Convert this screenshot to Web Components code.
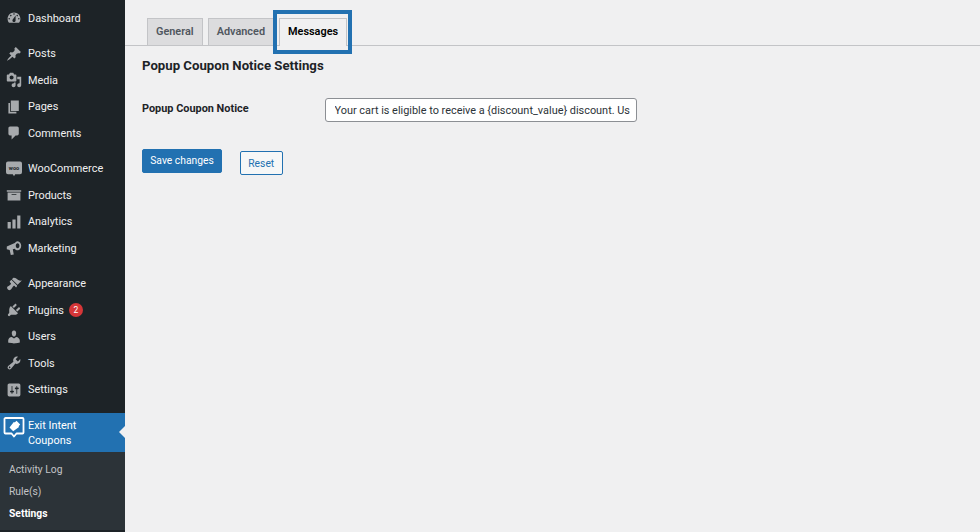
<!DOCTYPE html>
<html>
<head>
<meta charset="utf-8">
<title>Settings</title>
<style>
html, body { margin: 0; height: 100%; background: #f0f0f1; }
body { font-family: Roboto, "Liberation Sans", sans-serif; overflow: hidden; }
wp-page { height: 532px; }
</style>
</head>
<body>

<wp-page>
  <wp-sidebar slot="side">
    <wp-menu-item icon="dashboard">Dashboard</wp-menu-item>
    <wp-menu-sep></wp-menu-sep>
    <wp-menu-item icon="post">Posts</wp-menu-item>
    <wp-menu-item icon="media">Media</wp-menu-item>
    <wp-menu-item icon="page">Pages</wp-menu-item>
    <wp-menu-item icon="comments">Comments</wp-menu-item>
    <wp-menu-sep></wp-menu-sep>
    <wp-menu-item icon="woo">WooCommerce</wp-menu-item>
    <wp-menu-item icon="archive">Products</wp-menu-item>
    <wp-menu-item icon="chart">Analytics</wp-menu-item>
    <wp-menu-item icon="megaphone">Marketing</wp-menu-item>
    <wp-menu-sep></wp-menu-sep>
    <wp-menu-item icon="appearance">Appearance</wp-menu-item>
    <wp-menu-item icon="plugins" badge="2">Plugins</wp-menu-item>
    <wp-menu-item icon="users">Users</wp-menu-item>
    <wp-menu-item icon="tools">Tools</wp-menu-item>
    <wp-menu-item icon="settings">Settings</wp-menu-item>
    <wp-menu-active>Exit Intent<br>Coupons</wp-menu-active>
    <wp-submenu>
      <a>Activity Log</a>
      <a>Rule(s)</a>
      <a class="current">Settings</a>
    </wp-submenu>
  </wp-sidebar>

  <wp-tabs>
    <wp-tab>General</wp-tab>
    <wp-tab>Advanced</wp-tab>
    <wp-tab active>Messages</wp-tab>
  </wp-tabs>
  <wp-settings heading="Popup Coupon Notice Settings" label="Popup Coupon Notice"
    value="Your cart is eligible to receive a {discount_value} discount. Use code {coupon_code} at checkout."></wp-settings>
</wp-page>

<script>
const ICONS = {
  dashboard: '<path fill-rule="evenodd" d="M3.76 16h12.48c1.1-1.37 1.76-3.11 1.76-5 0-4.42-3.58-8-8-8s-8 3.58-8 8c0 1.89.66 3.63 1.76 5zM10 4c.55 0 1 .45 1 1s-.45 1-1 1-1-.45-1-1 .45-1 1-1zM6 6c.55 0 1 .45 1 1s-.45 1-1 1-1-.45-1-1 .45-1 1-1zm8 0c.55 0 1 .45 1 1s-.45 1-1 1-1-.45-1-1 .45-1 1-1zm-5.37 5.55L12 7v6c0 1.1-.9 2-2 2s-2-.9-2-2c0-.57.24-1.08.63-1.45zM4 10c.55 0 1 .45 1 1s-.45 1-1 1-1-.45-1-1 .45-1 1-1zm12 0c.55 0 1 .45 1 1s-.45 1-1 1-1-.45-1-1 .45-1 1-1z"/>',
  post: '<path d="M10.44 3.02l1.82-1.82 6.36 6.35-1.83 1.82c-1.05-.68-2.48-.57-3.41.36l-.75.75c-.92.93-1.04 2.35-.35 3.41l-1.83 1.82-2.41-2.41-2.8 2.79c-.42.42-3.38 2.71-3.8 2.29s1.86-3.39 2.28-3.81l2.79-2.79L4.1 9.36l1.83-1.82c1.05.69 2.48.57 3.4-.36l.75-.75c.93-.92 1.05-2.35.36-3.41z"/>',
  media: '<path fill-rule="evenodd" d="M13 11V4c0-.55-.45-1-1-1h-1.67L9 1H5L3.67 3H2c-.55 0-1 .45-1 1v7c0 .55.45 1 1 1h10c.55 0 1-.45 1-1zM7 4.5c1.38 0 2.5 1.12 2.5 2.5S8.38 9.5 7 9.5 4.5 8.38 4.5 7 5.62 4.5 7 4.5zM14 6h5v10.5c0 1.38-1.12 2.5-2.5 2.5S14 17.88 14 16.5s1.12-2.5 2.5-2.5c.17 0 .34.02.5.05V9h-3V6zm-4 8.05V13h2v3.5c0 1.38-1.12 2.5-2.5 2.5S7 17.88 7 16.5 8.12 14 9.5 14c.17 0 .34.02.5.05z"/>',
  page: '<path d="M6 15V2h10v13H6zm-1 1h8v2H3V5h2v11z"/>',
  comments: '<path d="M5 2h9c1.1 0 2 .9 2 2v7c0 1.1-.9 2-2 2h-2l-5 5v-5H5c-1.1 0-2-.9-2-2V4c0-1.1.9-2 2-2z"/>',
  woo: '<path d="M2.5 0.5h15A2.500 2.500 0 0 1 20 3v11a2.500 2.500 0 0 1-2.500 2.500H11.500L10 19l-1.500-2.500H2.500A2.500 2.500 0 0 1 0 14V3A2.500 2.500 0 0 1 2.500 0.5z"/><text x="10" y="11" text-anchor="middle" font-size="7" font-weight="700" fill="#1d2327" font-family="Roboto, sans-serif">woo</text>',
  archive: '<path fill-rule="evenodd" d="M19 4v2H1V4h18zM2 7h16v10H2V7zm11 3V9H7v1h6z"/>',
  chart: '<path d="M18 18V2h-4v16h4zm-6 0V7H8v11h4zm-6 0v-8H2v8h4z"/>',
  megaphone: '<path fill-rule="evenodd" d="M1 8 11 3.800C11.800 2.600 13.200 1.500 14.500 1.500c2.800 0 4.500 2.900 4.500 5.700s-1.700 5.700-4.500 5.700c-1.300 0-2.700-.8-3.500-2L8.500 11.500l1.200 6.500-3.700.8-1.400-6.300L1 11.500zM14.500 4.200c-1.300 0-2.300 1.300-2.300 3s1 3 2.300 3 2.300-1.300 2.300-3-1-3-2.300-3z"/>',
  appearance: '<path d="M14.480 11.060 7.410 3.990l1.500-1.500c.5-.56 2.300-.47 3.510.32 1.210.8 1.430 1.280 2.910 2.100 1.180.64 2.450 1.260 4.450.85zm-.71.71L6.700 4.700 4.930 6.470c-.39.39-.39 1.020 0 1.410l1.060 1.060c.39.39.39 1.030 0 1.420-.6.6-1.430 1.110-2.210 1.690-.35.26-.7.53-1.010.84C1.430 13.230 1 14.500 1.700 15.800c.5.900 1.600 1.600 2.500 1.900 1.100-.3 2-1.100 2.700-1.900.31-.31.58-.66.84-1.010.58-.78 1.090-1.610 1.690-2.210.39-.39 1.030-.39 1.420 0l1.060 1.060c.39.39 1.020.39 1.410 0z"/>',
  plugins: '<path d="M13.110 4.360 9.870 7.600 8 5.730l3.240-3.240c.35-.34 1.050-.2 1.560.32.52.51.66 1.210.31 1.550zm-8 1.770.91-1.120 9.010 9.010-1.190.84c-.71.71-2.630 1.160-3.820 1.160H6.140L4.900 17.260c-.59.59-1.540.59-2.120 0-.59-.58-.59-1.530 0-2.120l1.240-1.240v-3.880c0-1.130.4-3.190 1.090-3.890zm7.260 3.970 3.240-3.240c.34-.35 1.040-.21 1.550.31.52.51.66 1.210.31 1.550l-3.240 3.250z"/>',
  users: '<path d="M10 9.250c-2.270 0-2.730-3.440-2.730-3.440C7 4.020 7.820 2 9.970 2c2.160 0 2.980 2.020 2.710 3.810 0 0-.41 3.440-2.680 3.440zm0 2.570L12.720 10c2.390 0 4.520 2.330 4.520 4.530v2.490s-3.650 1.130-7.240 1.130c-3.650 0-7.240-1.130-7.240-1.130v-2.490c0-2.250 1.940-4.480 4.470-4.480z"/>',
  tools: '<path fill-rule="evenodd" d="M16.680 9.770c-1.340 1.340-3.300 1.670-4.950.99l-5.410 6.520c-.99.99-2.590.99-3.580 0s-.99-2.590 0-3.570l6.520-5.420c-.68-1.650-.35-3.610.99-4.950 1.280-1.280 3.120-1.620 4.720-1.060l-2.890 2.890 2.820 2.820 2.860-2.870c.53 1.580.18 3.390-1.080 4.650zM3.810 16.210c.4.39 1.040.39 1.430 0 .4-.4.4-1.040 0-1.430-.39-.4-1.030-.4-1.430 0-.39.39-.39 1.030 0 1.430z"/>',
  settings: '<path fill-rule="evenodd" d="M18 16V4c0-1.100-.9-2-2-2H4c-1.100 0-2 .9-2 2v12c0 1.100.9 2 2 2h12c1.100 0 2-.9 2-2zM8 11h1c.55 0 1 .45 1 1s-.45 1-1 1H8v1.500c0 .28-.22.5-.5.5s-.5-.22-.5-.5V13H6c-.55 0-1-.45-1-1s.45-1 1-1h1V5.500c0-.28.22-.5.5-.5s.5.22.5.5V11zm5-2h-1c-.55 0-1-.45-1-1s.45-1 1-1h1V5.500c0-.28.22-.5.5-.5s.5.22.5.5V7h1c.55 0 1 .45 1 1s-.45 1-1 1h-1v5.500c0 .28-.22.5-.5.5s-.5-.22-.5-.5V9z"/>'
};

const pageTpl = document.createElement('template');
pageTpl.innerHTML = `
<style>
:host { display: grid; grid-template-columns: 125px 1fr; background: #f0f0f1; overflow: hidden; }
main { padding-top: 18px; min-width: 0; }
</style>
<slot name="side"></slot>
<main><slot></slot></main>`;

class WpPage extends HTMLElement {
  constructor() {
    super();
    this.attachShadow({ mode: 'open' }).appendChild(pageTpl.content.cloneNode(true));
  }
}
customElements.define('wp-page', WpPage);

class WpSidebar extends HTMLElement {
  constructor() {
    super();
    this.attachShadow({ mode: 'open' }).innerHTML = `
<style>
:host { display: flex; flex-direction: column; background: #1d2327; padding-top: 5px; font-size: 10.900px; }
</style>
<slot></slot>`;
  }
}
customElements.define('wp-sidebar', WpSidebar);

class WpMenuItem extends HTMLElement {
  constructor() {
    super();
    const badge = this.getAttribute('badge');
    const icon = ICONS[this.getAttribute('icon')] || '';
    this.attachShadow({ mode: 'open' }).innerHTML = `
<style>
:host { display: flex; align-items: center; height: 26.500px; color: #f0f0f1; }
svg { width: 16px; height: 16px; margin: 0 6px; fill: #a7aaad; flex: none; }
.badge { margin-left: 5px; width: 14px; height: 14px; border-radius: 50%; background: #d63638; color: #fff;
  font-size: 8.500px; display: flex; align-items: center; justify-content: center; }
</style>
<svg viewBox="0 0 20 20">${icon}</svg><slot></slot>${badge ? `<span class="badge">${badge}</span>` : ''}`;
  }
}
customElements.define('wp-menu-item', WpMenuItem);

class WpMenuSep extends HTMLElement {
  constructor() {
    super();
    this.attachShadow({ mode: 'open' }).innerHTML = `<style>:host { display: block; height: 9px; }</style>`;
  }
}
customElements.define('wp-menu-sep', WpMenuSep);

class WpMenuActive extends HTMLElement {
  constructor() {
    super();
    this.attachShadow({ mode: 'open' }).innerHTML = `
<style>
:host { display: flex; align-items: flex-start; height: 39.500px; margin-top: 9.500px; background: #2271b1; color: #fff;
  position: relative; line-height: 15px; }
svg { width: 22px; height: 22px; margin: 3.500px 3px 0 3px; flex: none; }
span.txt { padding-top: 5px; }
.arrow { position: absolute; right: 0; top: 13.500px; border: 6.500px solid transparent; border-right-color: #f0f0f1; border-left-width: 0; }
</style>
<svg viewBox="0 0 22 22">
  <path fill="none" stroke="#fff" stroke-width="1.800" stroke-linejoin="round" d="M2.500 2h17a1 1 0 0 1 1 1v13.500a1 1 0 0 1-1 1h-6L11 20.500l-2.500-3h-6a1 1 0 0 1-1-1V3a1 1 0 0 1 1-1z"/>
  <path fill="#fff" d="M13.500 4.800l3.700 3.700-1.200 1.200a1 1 0 0 0 0 1.400l-5.800 4.100-3.700-3.700L10.800 6a1 1 0 0 0 1.400 0z"/>
</svg>
<span class="txt"><slot></slot></span>
<span class="arrow"></span>`;
  }
}
customElements.define('wp-menu-active', WpMenuActive);

const submenuTpl = document.createElement('template');
submenuTpl.innerHTML = `
<style>
:host { display: flex; flex-direction: column; background: #2c3338; padding: 6.500px 0 5.500px 9px; font-size: 10.300px; color: #c3c4c7; line-height: 22px; }
::slotted(a) { display: block; }
::slotted(a.current) { color: #fff; font-weight: 700; }
</style>
<slot></slot>`;
class WpSubmenu extends HTMLElement {
  constructor() {
    super();
    this.attachShadow({ mode: 'open' }).appendChild(submenuTpl.content.cloneNode(true));
  }
}
customElements.define('wp-submenu', WpSubmenu);

class WpTabs extends HTMLElement {
  constructor() {
    super();
    this.attachShadow({ mode: 'open' }).innerHTML = `
<style>
:host { display: flex; gap: 5px; padding-left: 22px; border-bottom: 1px solid #c3c4c7; height: 27px; align-items: flex-end; }
</style>
<slot></slot>`;
  }
}
customElements.define('wp-tabs', WpTabs);

class WpTab extends HTMLElement {
  constructor() {
    super();
    this.attachShadow({ mode: 'open' }).innerHTML = `
<style>
:host { display: flex; align-items: center; box-sizing: border-box; height: 27px; padding: 0 8px 2px; border: 1px solid #c3c4c7; border-bottom: 0;
  background: #dcdcde; color: #50575e; font-size: 10.900px; font-weight: 600; position: relative; }
:host([active]) { background: #f0f0f1; color: #000; height: 28px; margin-bottom: -1px; padding-bottom: 3px; }
.mark { display: none; position: absolute; left: -7px; right: -6px; top: -9px; bottom: -8px; border: 4.500px solid #2271b1; }
:host([active]) .mark { display: block; }
</style>
<slot></slot><span class="mark"></span>`;
  }
}
customElements.define('wp-tab', WpTab);

class WpSettings extends HTMLElement {
  constructor() {
    super();
    const root = this.attachShadow({ mode: 'open' });
    root.innerHTML = `
<style>
:host { display: block; padding: 11px 0 0 17px; color: #1d2327; }
h2 { margin: 0; font-size: 13.200px; line-height: 17px; font-weight: 700; }
.row { display: grid; grid-template-columns: 182.500px 312px; margin-top: 24px; align-items: start; }
label { font-size: 10.900px; font-weight: 700; line-height: 14px; padding-top: 4px; }
input { box-sizing: border-box; width: 312px; height: 24px; padding: 0 6px 0 9px; border: 1px solid #8c8f94; border-radius: 3px;
  background: #fff; color: #2c3338; font: 10.900px Roboto, "Liberation Sans", sans-serif; outline: 0; }
.actions { display: flex; align-items: flex-start; gap: 17.500px; margin-top: 27px; }
button { box-sizing: border-box; font: 10.300px Roboto, "Liberation Sans", sans-serif; border-radius: 2px; border: 1px solid #2271b1; padding: 0; }
.save { width: 80px; height: 24px; padding-bottom: 2px; background: #2271b1; color: #fff; }
.reset { width: 43.500px; height: 24px; margin-top: 2px; background: #f6f7f7; color: #2271b1; }
</style>
<h2></h2>
<div class="row"><label></label><input type="text"></div>
<div class="actions"><button class="save">Save changes</button><button class="reset">Reset</button></div>`;
    root.querySelector('h2').textContent = this.getAttribute('heading');
    root.querySelector('label').textContent = this.getAttribute('label');
    root.querySelector('input').value = this.getAttribute('value');
  }
}
customElements.define('wp-settings', WpSettings);
</script>
</body>
</html>
